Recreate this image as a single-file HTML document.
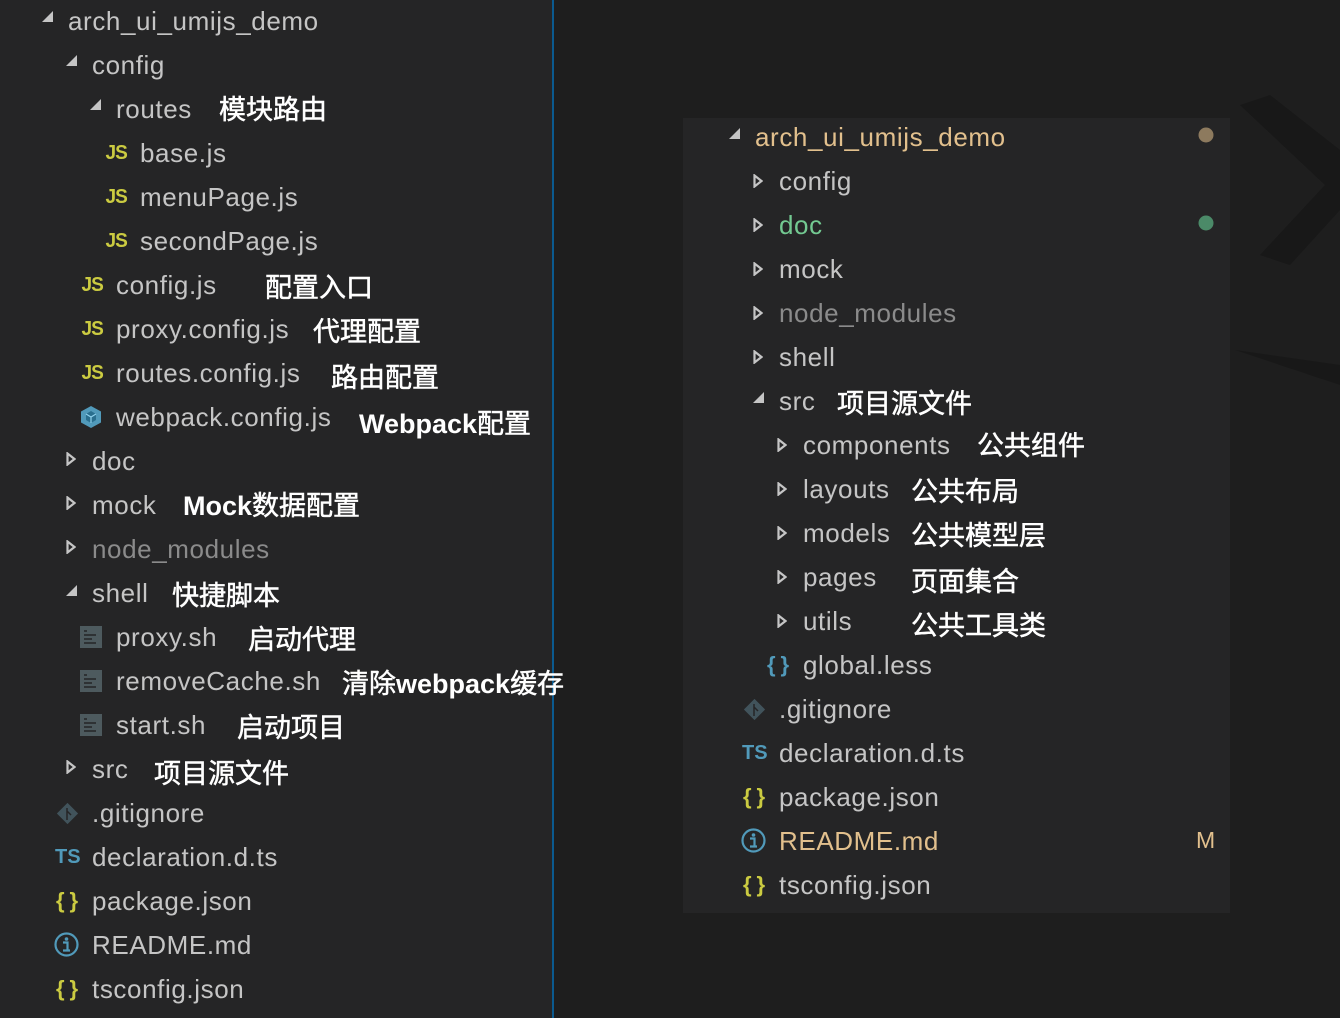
<!DOCTYPE html>
<html><head><meta charset="utf-8"><style>
*{margin:0;padding:0;box-sizing:border-box}
body{width:1340px;height:1018px;background:#1e1e1e;position:relative;overflow:hidden;font-family:"Liberation Sans","Noto Sans CJK SC",sans-serif;color:#c5c5c5}
#left{position:absolute;left:0;top:0;width:552px;height:1018px;background:#252526}
#bar{position:absolute;left:552px;top:0;width:2px;height:1018px;background:#0b5a8f}
#panel{position:absolute;left:683px;top:118px;width:547px;height:795px;background:#252526}
.t{position:absolute;font-size:26px;letter-spacing:0.6px;line-height:44px;height:44px;white-space:nowrap}
.a{position:absolute;font-size:27px;line-height:44px;height:44px;color:#fff;font-weight:normal;-webkit-text-stroke:0.5px #fff;white-space:nowrap;font-family:"Noto Sans CJK SC","Liberation Sans",sans-serif}
.a b{font-family:"Liberation Sans",sans-serif;font-weight:bold;-webkit-text-stroke:0}
.i{position:absolute}
.js{position:absolute;font-size:20px;font-weight:bold;color:#cbcb41;line-height:44px;font-family:"Liberation Sans",sans-serif;transform:scaleX(0.95);letter-spacing:-1px}
.ts{position:absolute;font-size:20px;font-weight:bold;color:#519aba;line-height:44px}
.br{position:absolute;font-size:22px;font-weight:bold;color:#cbcb41;line-height:44px;letter-spacing:5px}
.dim{color:#8b8b8b}
</style></head><body>
<svg style="position:absolute;left:1230px;top:90px" width="110" height="300"><polygon points="10,15 40,5 110,60 110,120 60,175 30,165 95,95" fill="#181818"/><polygon points="5,260 110,275 110,295" fill="#181818"/></svg>
<div id="left"></div><div id="bar"></div><div id="panel"></div>
<svg width="0" height="0" style="position:absolute"><defs>
<g id="ex"><polygon points="11,0 11,11 0,11" fill="#c5c5c5"/></g>
<g id="co"><polygon points="1.5,1.5 8.5,7 1.5,12.5" fill="none" stroke="#c5c5c5" stroke-width="2.2"/></g>
<g id="sh"><rect x="0" y="0" width="22" height="22" fill="#4d5a5e"/><path d="M4 5h3M4 9h12M4 13h8M4 17h12" stroke="#252526" stroke-width="1.6"/></g>
<g id="git"><rect x="5" y="5" width="15" height="15" transform="rotate(45 12.5 12.5)" fill="#41535b"/><path d="M12 7v12M12 10l4 4" stroke="#252526" stroke-width="1.5"/></g>
<g id="info"><circle cx="12.5" cy="12.5" r="11" fill="none" stroke="#519aba" stroke-width="2.2"/><circle cx="12.5" cy="7" r="1.8" fill="#519aba"/><path d="M9 10.5h4.5v8M9 18.5h7" stroke="#519aba" stroke-width="2.2" fill="none"/></g>
<g id="cube"><polygon points="12,1 22,6.5 22,17.5 12,23 2,17.5 2,6.5" fill="#519aba"/><polygon points="12,6 17,9 17,15 12,18 7,15 7,9" fill="#2a6f8e"/><path d="M7 9l5 3 5-3M12 12v6" stroke="#8ed0ec" stroke-width="1.2" fill="none"/></g>
</defs></svg>

<!-- LEFT -->
<svg class="i" style="left:42px;top:11px" width="12" height="12"><use href="#ex"/></svg><div class="t" style="left:68px;top:-1px">arch_ui_umijs_demo</div>
<svg class="i" style="left:66px;top:55px" width="12" height="12"><use href="#ex"/></svg><div class="t" style="left:92px;top:43px">config</div>
<svg class="i" style="left:90px;top:99px" width="12" height="12"><use href="#ex"/></svg><div class="t" style="left:116px;top:87px">routes</div><div class="a" style="left:219px;top:86px">模块路由</div>
<div class="js" style="left:105px;top:131px">JS</div><div class="t" style="left:140px;top:131px">base.js</div>
<div class="js" style="left:105px;top:175px">JS</div><div class="t" style="left:140px;top:175px">menuPage.js</div>
<div class="js" style="left:105px;top:219px">JS</div><div class="t" style="left:140px;top:219px">secondPage.js</div>
<div class="js" style="left:81px;top:263px">JS</div><div class="t" style="left:116px;top:263px">config.js</div><div class="a" style="left:265px;top:264px">配置入口</div>
<div class="js" style="left:81px;top:307px">JS</div><div class="t" style="left:116px;top:307px">proxy.config.js</div><div class="a" style="left:313px;top:308px">代理配置</div>
<div class="js" style="left:81px;top:351px">JS</div><div class="t" style="left:116px;top:351px">routes.config.js</div><div class="a" style="left:331px;top:354px">路由配置</div>
<svg class="i" style="left:79px;top:405px" width="24" height="24"><use href="#cube"/></svg><div class="t" style="left:116px;top:395px">webpack.config.js</div><div class="a" style="left:359px;top:400px"><b>Webpack</b>配置</div>
<svg class="i" style="left:66px;top:452px" width="10" height="14"><use href="#co"/></svg><div class="t" style="left:92px;top:439px">doc</div>
<svg class="i" style="left:66px;top:496px" width="10" height="14"><use href="#co"/></svg><div class="t" style="left:92px;top:483px">mock</div><div class="a" style="left:183px;top:482px"><b>Mock</b>数据配置</div>
<svg class="i" style="left:66px;top:540px" width="10" height="14"><use href="#co"/></svg><div class="t dim" style="left:92px;top:527px">node_modules</div>
<svg class="i" style="left:66px;top:585px" width="12" height="12"><use href="#ex"/></svg><div class="t" style="left:92px;top:571px">shell</div><div class="a" style="left:172px;top:572px">快捷脚本</div>
<svg class="i" style="left:80px;top:626px" width="22" height="22"><use href="#sh"/></svg><div class="t" style="left:116px;top:615px">proxy.sh</div><div class="a" style="left:248px;top:616px">启动代理</div>
<svg class="i" style="left:80px;top:670px" width="22" height="22"><use href="#sh"/></svg><div class="t" style="left:116px;top:659px">removeCache.sh</div><div class="a" style="left:342px;top:660px">清除<b>webpack</b>缓存</div>
<svg class="i" style="left:80px;top:714px" width="22" height="22"><use href="#sh"/></svg><div class="t" style="left:116px;top:703px">start.sh</div><div class="a" style="left:237px;top:704px">启动项目</div>
<svg class="i" style="left:66px;top:760px" width="10" height="14"><use href="#co"/></svg><div class="t" style="left:92px;top:747px">src</div><div class="a" style="left:154px;top:750px">项目源文件</div>
<svg class="i" style="left:55px;top:801px" width="25" height="25"><use href="#git"/></svg><div class="t" style="left:92px;top:791px">.gitignore</div>
<div class="ts" style="left:55px;top:835px">TS</div><div class="t" style="left:92px;top:835px">declaration.d.ts</div>
<div class="br" style="left:56px;top:879px">{}</div><div class="t" style="left:92px;top:879px">package.json</div>
<svg class="i" style="left:54px;top:932px" width="26" height="26"><use href="#info"/></svg><div class="t" style="left:92px;top:923px">README.md</div>
<div class="br" style="left:56px;top:967px">{}</div><div class="t" style="left:92px;top:967px">tsconfig.json</div>

<!-- RIGHT -->
<svg class="i" style="left:729px;top:128px" width="12" height="12"><use href="#ex"/></svg><div class="t" style="left:755px;top:115px;color:#e2c08d">arch_ui_umijs_demo</div>
<svg class="i" style="left:1198px;top:127px" width="16" height="16"><circle cx="8" cy="8" r="7.5" fill="#8d7a5e"/></svg>
<svg class="i" style="left:753px;top:174px" width="10" height="14"><use href="#co"/></svg><div class="t" style="left:779px;top:159px">config</div>
<svg class="i" style="left:753px;top:218px" width="10" height="14"><use href="#co"/></svg><div class="t" style="left:779px;top:203px;color:#73c991">doc</div>
<svg class="i" style="left:1198px;top:215px" width="16" height="16"><circle cx="8" cy="8" r="7.5" fill="#4b8a68"/></svg>
<svg class="i" style="left:753px;top:262px" width="10" height="14"><use href="#co"/></svg><div class="t" style="left:779px;top:247px">mock</div>
<svg class="i" style="left:753px;top:306px" width="10" height="14"><use href="#co"/></svg><div class="t dim" style="left:779px;top:291px">node_modules</div>
<svg class="i" style="left:753px;top:350px" width="10" height="14"><use href="#co"/></svg><div class="t" style="left:779px;top:335px">shell</div>
<svg class="i" style="left:753px;top:392px" width="12" height="12"><use href="#ex"/></svg><div class="t" style="left:779px;top:379px">src</div><div class="a" style="left:837px;top:380px">项目源文件</div>
<svg class="i" style="left:777px;top:438px" width="10" height="14"><use href="#co"/></svg><div class="t" style="left:803px;top:423px">components</div><div class="a" style="left:977px;top:422px">公共组件</div>
<svg class="i" style="left:777px;top:482px" width="10" height="14"><use href="#co"/></svg><div class="t" style="left:803px;top:467px">layouts</div><div class="a" style="left:911px;top:468px">公共布局</div>
<svg class="i" style="left:777px;top:526px" width="10" height="14"><use href="#co"/></svg><div class="t" style="left:803px;top:511px">models</div><div class="a" style="left:911px;top:512px">公共模型层</div>
<svg class="i" style="left:777px;top:570px" width="10" height="14"><use href="#co"/></svg><div class="t" style="left:803px;top:555px">pages</div><div class="a" style="left:911px;top:558px">页面集合</div>
<svg class="i" style="left:777px;top:614px" width="10" height="14"><use href="#co"/></svg><div class="t" style="left:803px;top:599px">utils</div><div class="a" style="left:911px;top:602px">公共工具类</div>
<div class="br" style="left:767px;top:643px;color:#519aba">{}</div><div class="t" style="left:803px;top:643px">global.less</div>
<svg class="i" style="left:742px;top:697px" width="25" height="25"><use href="#git"/></svg><div class="t" style="left:779px;top:687px">.gitignore</div>
<div class="ts" style="left:742px;top:731px">TS</div><div class="t" style="left:779px;top:731px">declaration.d.ts</div>
<div class="br" style="left:743px;top:775px">{}</div><div class="t" style="left:779px;top:775px">package.json</div>
<svg class="i" style="left:741px;top:828px" width="26" height="26"><use href="#info"/></svg><div class="t" style="left:779px;top:819px;color:#e2c08d">README.md</div><div class="t" style="left:1196px;top:818px;color:#e2c08d;font-size:23px">M</div>
<div class="br" style="left:743px;top:863px">{}</div><div class="t" style="left:779px;top:863px">tsconfig.json</div>
</body></html>
